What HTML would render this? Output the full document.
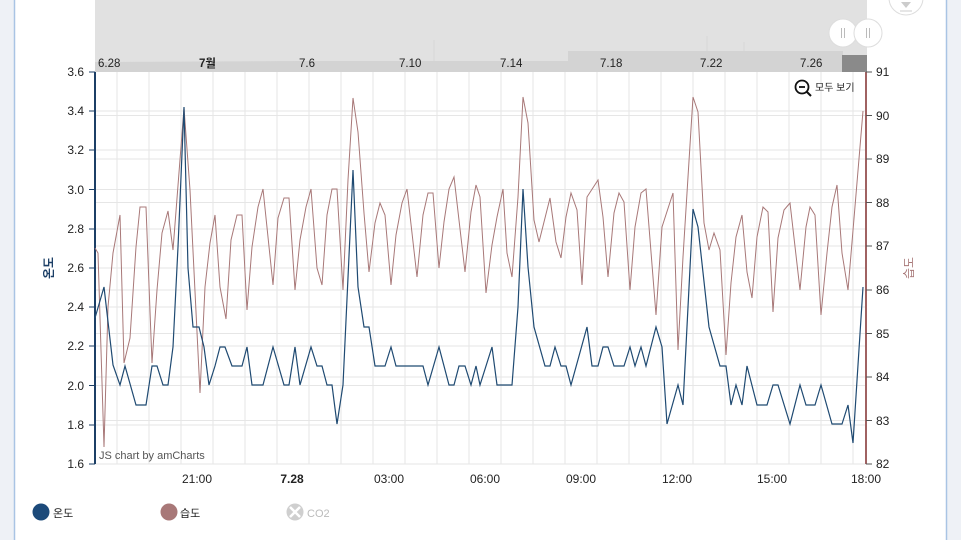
<!DOCTYPE html>
<html><head><meta charset="utf-8"><style>
html,body{margin:0;padding:0;width:961px;height:540px;overflow:hidden;background:#fff;font-family:"Liberation Sans","Noto Sans CJK KR",sans-serif}
</style></head><body>
<svg width="961" height="540" xmlns="http://www.w3.org/2000/svg" style="position:absolute;left:0;top:0;font-family:'Liberation Sans','Noto Sans CJK KR',sans-serif">
<rect x="0" y="0" width="14" height="540" fill="#eef1f6"/>
<line x1="14.5" y1="0" x2="14.5" y2="540" stroke="#a9c4e4" stroke-width="1.5"/>
<rect x="947" y="0" width="14" height="540" fill="#eef1f6"/>
<line x1="946.5" y1="0" x2="946.5" y2="540" stroke="#a9c4e4" stroke-width="1.5"/>
<!-- scrollbar -->
<rect x="95" y="0" width="772" height="72" fill="#e1e1e1"/>
<path d="M95 62 L300 61 L568 61 L568 51 L843 51 L843 72 L95 72Z" fill="#d3d3d3"/>
<rect x="842" y="55" width="25" height="17" fill="#8a8a8a"/>
<g stroke="#d6d6d6" stroke-width="0.8">
<line x1="434" y1="40" x2="434" y2="61"/><line x1="707" y1="36" x2="707" y2="51"/><line x1="744" y1="42" x2="744" y2="51"/>
</g>
<g font-size="11.5" fill="#222">
<text x="98" y="67">6.28</text><text x="199" y="67" font-weight="bold">7월</text><text x="299" y="67">7.6</text><text x="399" y="67">7.10</text><text x="500" y="67">7.14</text><text x="600" y="67">7.18</text><text x="700" y="67">7.22</text><text x="800" y="67">7.26</text>
</g>
<circle cx="843" cy="33" r="14" fill="#fff" stroke="#ddd"/>
<circle cx="868" cy="33" r="14" fill="#fff" stroke="#ddd"/>
<g stroke="#bbb" stroke-width="1"><line x1="841.5" y1="28" x2="841.5" y2="38"/><line x1="844.5" y1="28" x2="844.5" y2="38"/><line x1="866.5" y1="28" x2="866.5" y2="38"/><line x1="869.5" y1="28" x2="869.5" y2="38"/></g>
<circle cx="906" cy="-2" r="17" fill="#fff" stroke="#ddd"/>
<path d="M901 2 L911 2 L906 8Z" fill="#ccc"/><line x1="900" y1="11" x2="912" y2="11" stroke="#ccc"/>
<!-- grid -->
<g stroke="#e6e6e6" stroke-width="1">
<line x1="95" y1="111" x2="866" y2="111"/><line x1="95" y1="150" x2="866" y2="150"/><line x1="95" y1="189.5" x2="866" y2="189.5"/><line x1="95" y1="229" x2="866" y2="229"/><line x1="95" y1="268" x2="866" y2="268"/><line x1="95" y1="307" x2="866" y2="307"/><line x1="95" y1="346" x2="866" y2="346"/><line x1="95" y1="385.5" x2="866" y2="385.5"/><line x1="95" y1="425" x2="866" y2="425"/>
<line x1="95" y1="115.5" x2="866" y2="115.5"/><line x1="95" y1="159" x2="866" y2="159"/><line x1="95" y1="202.5" x2="866" y2="202.5"/><line x1="95" y1="246" x2="866" y2="246"/><line x1="95" y1="290" x2="866" y2="290"/><line x1="95" y1="333.5" x2="866" y2="333.5"/><line x1="95" y1="377" x2="866" y2="377"/><line x1="95" y1="420.5" x2="866" y2="420.5"/>
<line x1="95" y1="464" x2="866" y2="464"/>
<line x1="117" y1="72" x2="117" y2="464"/><line x1="149" y1="72" x2="149" y2="464"/><line x1="181" y1="72" x2="181" y2="464"/><line x1="213" y1="72" x2="213" y2="464"/><line x1="245" y1="72" x2="245" y2="464"/><line x1="277" y1="72" x2="277" y2="464"/><line x1="309" y1="72" x2="309" y2="464"/><line x1="341" y1="72" x2="341" y2="464"/><line x1="373" y1="72" x2="373" y2="464"/><line x1="405" y1="72" x2="405" y2="464"/><line x1="437" y1="72" x2="437" y2="464"/><line x1="469" y1="72" x2="469" y2="464"/><line x1="501" y1="72" x2="501" y2="464"/><line x1="533" y1="72" x2="533" y2="464"/><line x1="565" y1="72" x2="565" y2="464"/><line x1="597" y1="72" x2="597" y2="464"/><line x1="629" y1="72" x2="629" y2="464"/><line x1="661" y1="72" x2="661" y2="464"/><line x1="693" y1="72" x2="693" y2="464"/><line x1="725" y1="72" x2="725" y2="464"/><line x1="757" y1="72" x2="757" y2="464"/><line x1="789" y1="72" x2="789" y2="464"/><line x1="821" y1="72" x2="821" y2="464"/><line x1="853" y1="72" x2="853" y2="464"/>
</g>
<!-- axes -->
<line x1="95" y1="72" x2="95" y2="464" stroke="#1c3f66" stroke-width="2"/>
<line x1="866" y1="72" x2="866" y2="464" stroke="#a06262" stroke-width="2"/>
<g stroke="#1c3f66"><line x1="89" y1="72" x2="95" y2="72"/><line x1="89" y1="111" x2="95" y2="111"/><line x1="89" y1="150" x2="95" y2="150"/><line x1="89" y1="189.5" x2="95" y2="189.5"/><line x1="89" y1="229" x2="95" y2="229"/><line x1="89" y1="268" x2="95" y2="268"/><line x1="89" y1="307" x2="95" y2="307"/><line x1="89" y1="346" x2="95" y2="346"/><line x1="89" y1="385.5" x2="95" y2="385.5"/><line x1="89" y1="425" x2="95" y2="425"/><line x1="89" y1="464" x2="95" y2="464"/></g>
<g stroke="#555"><line x1="866" y1="72" x2="872" y2="72"/><line x1="866" y1="115.5" x2="872" y2="115.5"/><line x1="866" y1="159" x2="872" y2="159"/><line x1="866" y1="202.5" x2="872" y2="202.5"/><line x1="866" y1="246" x2="872" y2="246"/><line x1="866" y1="290" x2="872" y2="290"/><line x1="866" y1="333.5" x2="872" y2="333.5"/><line x1="866" y1="377" x2="872" y2="377"/><line x1="866" y1="420.5" x2="872" y2="420.5"/><line x1="866" y1="464" x2="872" y2="464"/></g>
<g font-size="12" fill="#222" text-anchor="end">
<text x="84" y="76">3.6</text><text x="84" y="115">3.4</text><text x="84" y="154">3.2</text><text x="84" y="194">3.0</text><text x="84" y="233">2.8</text><text x="84" y="272">2.6</text><text x="84" y="311">2.4</text><text x="84" y="350">2.2</text><text x="84" y="390">2.0</text><text x="84" y="429">1.8</text><text x="84" y="468">1.6</text>
</g>
<g font-size="12" fill="#222">
<text x="876" y="76">91</text><text x="876" y="120">90</text><text x="876" y="163">89</text><text x="876" y="207">88</text><text x="876" y="250">87</text><text x="876" y="294">86</text><text x="876" y="338">85</text><text x="876" y="381">84</text><text x="876" y="425">83</text><text x="876" y="468">82</text>
</g>
<g font-size="12" fill="#222" text-anchor="middle">
<text x="197" y="483">21:00</text><text x="292" y="483" font-weight="bold">7.28</text><text x="389" y="483">03:00</text><text x="485" y="483">06:00</text><text x="581" y="483">09:00</text><text x="677" y="483">12:00</text><text x="772" y="483">15:00</text><text x="866" y="483">18:00</text>
</g>
<text transform="translate(53,268) rotate(-90)" font-size="12" fill="#1c3f66" font-weight="bold" text-anchor="middle">온도</text>
<text transform="translate(913,268) rotate(-90)" font-size="12" fill="#a87878" text-anchor="middle">습도</text>
<!-- humidity -->
<polyline fill="none" stroke="#a87878" stroke-width="1" points="95,248 98,253 104,447 108,307 113,253 120,215 124,363 130,338 136,247 140,207 146,207 152,363 157,290 162,233 168,211 173,250 184,108 190,190 200,393 205,287 210,243 215,215 220,287 226,319 231,240 237,215 242,215 247,310 252,247 258,207 263,189 273,285 278,218 284,198 289,198 295,290 300,240 306,207 311,189 317,268 322,285 327,215 332,189 337,189 343,290 348,180 353,98 358,132 364,213 369,272 375,223 380,203 385,215 391,285 396,235 402,203 407,189 417,277 423,215 428,193 433,193 439,268 444,222 449,189 454,177 465,272 471,212 476,185 480,197 486,293 492,245 497,217 503,189 507,253 512,277 518,197 523,97 528,123 534,220 539,242 545,218 550,198 556,242 561,258 566,217 571,193 577,210 582,285 587,197 598,180 603,217 608,277 614,213 619,193 624,202 630,290 635,227 641,193 646,189 656,315 662,227 673,193 678,350 683,257 693,97 698,112 704,223 709,250 714,233 720,250 726,355 731,283 736,237 742,215 747,272 752,298 757,237 763,207 768,212 773,312 778,238 784,210 790,203 800,290 806,227 810,207 815,215 821,315 827,253 832,207 837,185 842,253 848,290 863,111"/>
<!-- temperature -->
<polyline fill="none" stroke="#1f4a72" stroke-width="1.2" points="95,318 104,287 113,365 120,385 125,366 136,405 146,405 152,366 157,366 163,385 168,385 173,347 178,247 184,107 188,268 193,327 199,327 204,347 209,385 215,366 220,347 225,347 232,366 242,366 247,347 252,385 263,385 273,347 284,385 289,385 295,347 300,385 311,347 317,366 322,366 327,385 332,385 337,424 343,385 353,170 358,287 364,327 369,327 375,366 385,366 391,347 396,366 423,366 428,385 439,347 449,385 454,385 459,366 465,366 471,385 476,366 480,385 492,347 497,385 512,385 518,307 523,189 528,267 534,327 545,366 550,366 555,347 561,366 566,366 571,385 587,327 592,366 598,366 603,347 608,347 614,366 624,366 630,347 635,366 641,347 646,366 656,327 662,347 667,424 678,385 683,405 693,209 698,227 709,327 720,366 726,366 731,405 736,385 742,405 747,366 757,405 767,405 773,385 778,385 790,424 800,385 806,405 815,405 821,385 832,424 842,424 848,405 853,443 863,287"/>
<text x="99" y="459" font-size="11" fill="#555">JS chart by amCharts</text>
<!-- zoom out -->
<circle cx="802" cy="87" r="6.5" fill="none" stroke="#111" stroke-width="1.8"/>
<line x1="799" y1="87" x2="805" y2="87" stroke="#111" stroke-width="1.8"/>
<line x1="807" y1="92" x2="811" y2="96" stroke="#111" stroke-width="2"/>
<text x="815" y="91" font-size="10" fill="#222">모두 보기</text>
<!-- legend -->
<circle cx="41" cy="512" r="8.5" fill="#1c4a7a"/>
<text x="53" y="517" font-size="11" fill="#222">온도</text>
<circle cx="169" cy="512" r="8.5" fill="#a87878"/>
<text x="180" y="517" font-size="11" fill="#222">습도</text>
<circle cx="295" cy="512" r="8.5" fill="#cfcfcf"/>
<path d="M290 507 L300 517 M300 507 L290 517" stroke="#fff" stroke-width="2.5"/>
<text x="307" y="517" font-size="11" fill="#bbb">CO2</text>
</svg>
</body></html>
